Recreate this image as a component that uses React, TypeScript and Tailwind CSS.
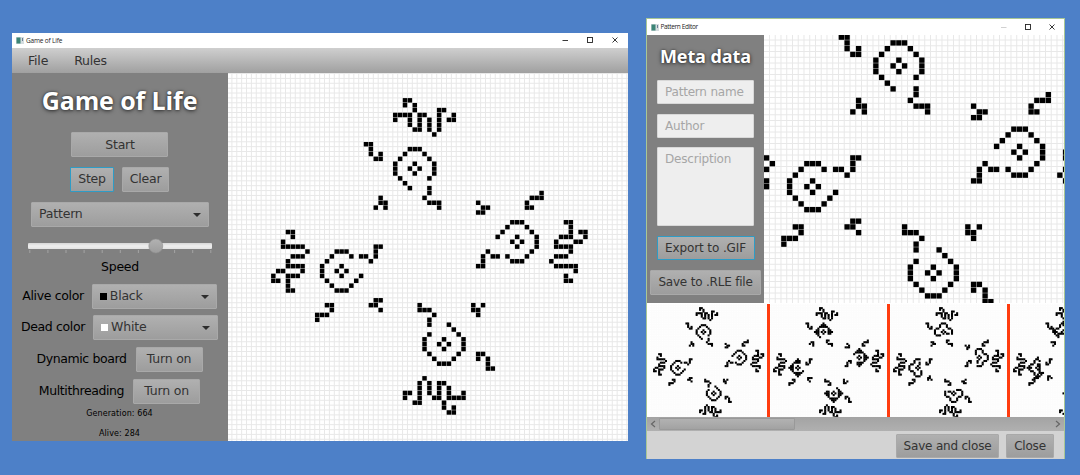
import type { ReactNode } from "react";

type Cell = [number, number];

// Cells of one arm, relative to the centre of its ring.
const ARM_ROWS: [number, number[]][] = [
  [-14, [-2, -1]],
  [-13, [-2, 0]],
  [-12, [0, 5, 6]],
  [-11, [-4, -3, -2, -1, 1, 2, 5, 8]],
  [-10, [-4, -1, 1, 3, 5, 7, 8]],
  [-9, [-1, 1, 3, 5]],
  [-8, [0, 1, 3, 5]],
  [-7, [4]],
  [-5, [-10, -9]],
  [-4, [-9, -1, 0, 1]],
  [-3, [-9, -7, -2, 2]],
  [-2, [-8, -7, -3, 3]],
  [-1, [-4, 0, 4]],
  [0, [-4, -1, 1, 4]],
  [1, [-4, 0, 4]],
  [2, [-3, 3]],
  [3, [-2]],
  [4, [-1, 3]],
  [5, [3]],
  [6, [-7, 2]],
  [7, [-7, -6, 3, 4, 5]],
  [8, [-8, -6, 5]],
];

// The whole pattern is the arm turned four times round the origin.
function seed(): Cell[] {
  const cells: Cell[] = [];
  for (const [row, cols] of ARM_ROWS) {
    for (const col of cols) {
      let x = col - 3;
      let y = row - 18;
      for (let turn = 0; turn < 4; turn++) {
        cells.push([x, y]);
        [x, y] = [-y, x];
      }
    }
  }
  return cells;
}

function step(cells: Cell[]): Cell[] {
  const alive = new Set(cells.map(([x, y]) => `${x},${y}`));
  const counts = new Map<string, number>();
  for (const [x, y] of cells) {
    for (let dx = -1; dx <= 1; dx++) {
      for (let dy = -1; dy <= 1; dy++) {
        if (dx === 0 && dy === 0) continue;
        const key = `${x + dx},${y + dy}`;
        counts.set(key, (counts.get(key) ?? 0) + 1);
      }
    }
  }
  const next: Cell[] = [];
  counts.forEach((n, key) => {
    if (n === 3 || (n === 2 && alive.has(key))) {
      const [x, y] = key.split(",").map(Number);
      next.push([x, y]);
    }
  });
  return next;
}

const GENERATIONS: Cell[][] = [seed()];
for (let i = 1; i < 4; i++) GENERATIONS.push(step(GENERATIONS[i - 1]));

interface BoardProps {
  cells: Cell[];
  width: number;
  height: number;
  pitch: number;
  cx: number;
  cy: number;
  line: string;
  gap: number;
}

function Board({ cells, width, height, pitch, cx, cy, line, gap }: BoardProps) {
  const left = cx - pitch / 2;
  const top = cy - pitch / 2;
  const xs: number[] = [];
  const ys: number[] = [];
  for (let x = left % pitch; x < width; x += pitch) xs.push(x);
  for (let y = top % pitch; y < height; y += pitch) ys.push(y);
  return (
    <svg width={width} height={height} className="block shrink-0 bg-white">
      <path
        d={xs.map((x) => `M${x} 0V${height}`).join("") + ys.map((y) => `M0 ${y}H${width}`).join("")}
        stroke={line}
        strokeWidth={1}
      />
      {cells.map(([x, y]) => (
        <rect
          key={`${x},${y}`}
          x={left + x * pitch + gap / 2}
          y={top + y * pitch + gap / 2}
          width={pitch - gap}
          height={pitch - gap}
        />
      ))}
    </svg>
  );
}

function AppIcon() {
  return (
    <svg width="8" height="7" viewBox="0 0 8 7" className="block shrink-0">
      <rect width="8" height="7" fill="#d5dde0" />
      <rect x="0.5" y="0.5" width="4" height="6" fill="#3c8576" />
      <rect x="6" y="1" width="1" height="3" fill="#6a7f95" />
    </svg>
  );
}

function Button({ className, focused, children }: { className: string; focused?: boolean; children: ReactNode }) {
  return (
    <button
      className={`flex shrink-0 items-center justify-center whitespace-nowrap rounded-[1px] border bg-linear-to-b from-[#b0b0b0] to-[#9d9d9d] text-[#333333] ${
        focused ? "border-[#2e9cc6]" : "border-[#a9a9a9]"
      } ${className}`}
    >
      {children}
    </button>
  );
}

function Combo({ className, swatch, children }: { className: string; swatch?: string; children: ReactNode }) {
  return (
    <div
      className={`flex h-[25px] shrink-0 items-center rounded-[1px] border border-[#a9a9a9] bg-linear-to-b from-[#b0b0b0] to-[#9d9d9d] pl-[7px] pr-[7px] text-[#333333] ${className}`}
    >
      {swatch && <span className={`mr-[3px] size-[7px] ${swatch}`} />}
      <span>{children}</span>
      <svg width="8" height="4" viewBox="0 0 8 4" className="ml-auto">
        <path d="M0 0H8L4 4Z" fill="#2d2d2d" />
      </svg>
    </div>
  );
}

function Slider() {
  return (
    <svg width="186" height="18" viewBox="0 0 186 18" className="block shrink-0">
      <defs>
        <linearGradient id="track" x1="0" y1="0" x2="0" y2="1">
          <stop offset="0" stopColor="#d6d6d6" />
          <stop offset="0.5" stopColor="#eeeeee" />
          <stop offset="1" stopColor="#e2e2e2" />
        </linearGradient>
        <linearGradient id="knob" x1="0" y1="0" x2="0" y2="1">
          <stop offset="0" stopColor="#b2b2b2" />
          <stop offset="1" stopColor="#9c9c9c" />
        </linearGradient>
      </defs>
      <rect x="1" y="6" width="184" height="6" rx="1" fill="url(#track)" />
      {Array.from({ length: 11 }, (_, i) => (
        <rect key={i} x={2.3 + i * 18.1} y="13" width="1" height="3" fill="#a3a3a3" />
      ))}
      <circle cx="128.8" cy="9" r="7" fill="url(#knob)" stroke="#8e8e8e" strokeWidth="0.6" />
    </svg>
  );
}

function GameWindow() {
  return (
    <section className="mt-[33px] flex h-[408px] w-[616px] flex-col bg-white font-['DejaVu_Sans',sans-serif] text-[12.5px] tracking-[-0.2px]">
      <header className="flex h-[15px] items-center pl-1 font-['Open_Sans',sans-serif] text-[6.5px] tracking-[-0.18px] text-[#222222]">
        <AppIcon />
        <span className="ml-[2px]">Game of Life</span>
        <svg width="64" height="15" viewBox="0 0 64 15" className="ml-auto mr-[4px]" fill="none" stroke="#222222" strokeWidth="0.9">
          <path d="M2.500 7.500H8M52.5 4.5L57.5 9.5M57.5 4.5L52.5 9.5" />
          <rect x="27.5" y="4.5" width="5" height="5" />
        </svg>
      </header>
      <nav className="flex h-[25px] items-center bg-linear-to-b from-[#cfcfcf] to-[#a0a0a0] pl-4 pt-px text-[#333333]">
        <span>File</span>
        <span className="ml-[26px]">Rules</span>
      </nav>
      <div className="flex h-[368px]">
        <aside className="flex w-[216px] shrink-0 flex-col items-center bg-[#808080] pr-px text-black">
          <h1 className="mt-[10px] h-[34px] whitespace-nowrap font-['Open_Sans',sans-serif] text-[25px] font-bold leading-[34px] tracking-[-0.1px] text-white [text-shadow:0_0_2px_#00000080,0_1px_4px_#000000a0]">
            Game of Life
          </h1>
          <Button className="mt-[15px] h-[25px] w-[97px] pl-px pt-px">Start</Button>
          <div className="mt-[10px] flex gap-[8px]">
            <Button focused className="h-[25px] w-[44px]">Step</Button>
            <Button className="h-[25px] w-[47px]">Clear</Button>
          </div>
          <Combo className="ml-px mt-[10px] w-[178px]">Pattern</Combo>
          <div className="mt-[10px] pl-px">
            <Slider />
          </div>
          <div className="mt-[3px] h-[16px] pl-px pt-px leading-[16px]">Speed</div>
          <div className="mt-[10px] flex items-center gap-[8px]">
            <span className="whitespace-nowrap tracking-[-0.35px]">Alive color</span>
            <Combo className="w-[125px]" swatch="bg-black">Black</Combo>
          </div>
          <div className="mt-[6px] flex items-center gap-[8px]">
            <span className="whitespace-nowrap tracking-[-0.35px]">Dead color</span>
            <Combo className="w-[125px]" swatch="bg-white">White</Combo>
          </div>
          <div className="mt-[7px] flex items-center gap-[9px]">
            <span className="whitespace-nowrap tracking-[-0.4px]">Dynamic board</span>
            <Button className="h-[25px] w-[67px]">Turn on</Button>
          </div>
          <div className="mt-[7px] flex items-center gap-[9px]">
            <span className="whitespace-nowrap tracking-[-0.4px]">Multithreading</span>
            <Button className="h-[25px] w-[67px]">Turn on</Button>
          </div>
          <div className="mt-[5px] h-[10px] whitespace-nowrap text-[8px] leading-[10px] tracking-[0.1px]">Generation: 664</div>
          <div className="mt-[10px] h-[10px] whitespace-nowrap text-[8px] leading-[10px] tracking-[0.1px]">Alive: 284</div>
        </aside>
        <Board cells={GENERATIONS[0]} width={400} height={368} pitch={4.877} cx={201.4} cy={183.4} line="#e8e8e8" gap={0.4} />
      </div>
    </section>
  );
}

function EditorWindow() {
  return (
    <section className="ml-[18px] mt-[18px] flex h-[441px] w-[419px] flex-col border-x border-t border-[#a9c795] bg-white font-['DejaVu_Sans',sans-serif] text-[12px] tracking-[-0.2px]">
      <header className="flex h-[16px] shrink-0 items-center pl-[4px] font-['Open_Sans',sans-serif] text-[6.5px] tracking-[-0.35px] text-[#222222]">
        <AppIcon />
        <span className="ml-[1.500px]">Pattern Editor</span>
        <svg width="64" height="15" viewBox="0 0 64 15" className="ml-auto mr-px" fill="none" stroke="#222222" strokeWidth="0.9">
          <path d="M2 7.5H7.5" stroke="#cccccc" />
          <path d="M50.5 4.5L55.5 9.5M55.5 4.5L50.5 9.5" />
          <rect x="26.5" y="4.5" width="5" height="5" />
        </svg>
      </header>
      <div className="flex h-[268px] shrink-0 overflow-hidden">
        <aside className="flex w-[117px] shrink-0 flex-col items-center bg-[#808080]">
          <h2 className="mt-[8px] h-[27px] whitespace-nowrap font-['Open_Sans',sans-serif] text-[18px] font-bold leading-[27px] tracking-[-0.1px] text-white [text-shadow:0_0_2px_#00000080,0_1px_4px_#000000a0]">
            Meta data
          </h2>
          <div className="mt-[10px] flex h-[24px] w-[97px] items-center rounded-[1px] border border-[#d8d8d8] bg-[#eeeeee] pl-[7px] text-[#a6a6a6]">
            <span className="whitespace-nowrap">Pattern name</span>
          </div>
          <div className="mt-[10px] flex h-[24px] w-[97px] items-center rounded-[1px] border border-[#d8d8d8] bg-[#eeeeee] pl-[7px] text-[#a6a6a6]">
            Author
          </div>
          <div className="mt-[9px] h-[79px] w-[97px] rounded-[1px] border border-[#d8d8d8] bg-[#eeeeee] pl-[7px] pt-[3px] leading-[16px] text-[#a6a6a6]">
            Description
          </div>
          <Button focused className="mt-[10px] h-[24px] w-[98px] tracking-[-0.1px]">Export to .GIF</Button>
          <Button className="mt-[10px] h-[25px] w-[111px] pb-px">Save to .RLE file</Button>
        </aside>
        <Board cells={GENERATIONS[0]} width={300} height={268} pitch={5.75} cx={152.1} cy={134.4} line="#e8e8e8" gap={0.4} />
      </div>
      <div className="flex h-[114px] shrink-0 overflow-hidden pl-[3px] pt-px">
        {GENERATIONS.map((cells, i) => (
          <div key={i} className="flex h-[113px] shrink-0 border-r-[3px] border-[#ff3c0f]">
            <Board cells={cells} width={117} height={113} pitch={1.705} cx={58.6} cy={58.7} line="#fcfcfc" gap={-0.35} />
          </div>
        ))}
      </div>
      <div className="flex h-[14px] shrink-0 items-center bg-linear-to-b from-[#a3a3a3] to-[#b0b0b0]">
        <svg width="12" height="14" viewBox="0 0 12 14" fill="none" stroke="#666666" strokeWidth="1.2">
          <path d="M8 4L4.500 7L8 10" />
        </svg>
        <div className="h-[12px] w-[136px] rounded-[1px] border border-[#999999] bg-linear-to-b from-[#b2b2b2] to-[#a2a2a2]" />
        <svg width="12" height="14" viewBox="0 0 12 14" className="ml-auto" fill="none" stroke="#666666" strokeWidth="1.2">
          <path d="M4 4L7.500 7L4 10" />
        </svg>
      </div>
      <footer className="flex flex-1 items-center justify-end gap-[7px] bg-[#d3d3d3] pr-[10px] pt-px">
        <Button className="h-[24px] w-[103px]">Save and close</Button>
        <Button className="h-[24px] w-[48px]">Close</Button>
      </footer>
    </section>
  );
}

export default function App() {
  return (
    <main className="flex h-[475px] w-[1080px] items-start overflow-hidden bg-[#4d80c8] pl-3">
      <GameWindow />
      <EditorWindow />
    </main>
  );
}
